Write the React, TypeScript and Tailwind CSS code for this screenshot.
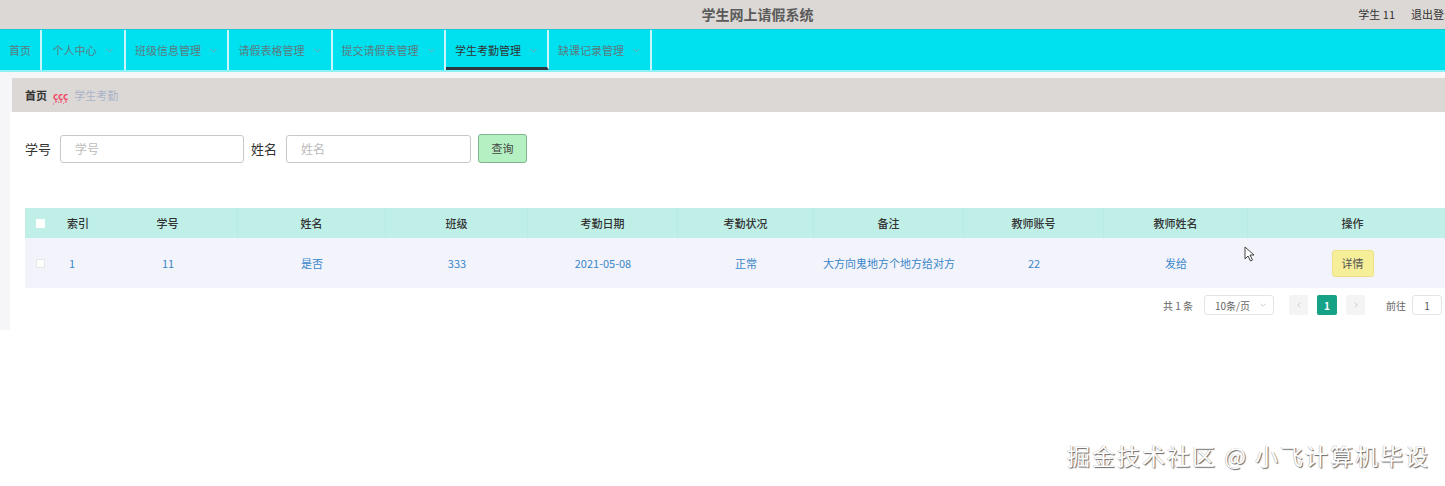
import React from 'react'

const font = { fontFamily: '"Noto Sans CJK SC", "Noto Sans", sans-serif' }

const navItems = [
  { label: '首页', w: 'w-[42px]', arrow: false },
  { label: '个人中心', w: 'w-[84px]', arrow: true },
  { label: '班级信息管理', w: 'w-[103px]', arrow: true },
  { label: '请假表格管理', w: 'w-[104px]', arrow: true },
  { label: '提交请假表管理', w: 'w-[113px]', arrow: true },
  { label: '学生考勤管理', w: 'w-[103px]', arrow: true, active: true },
  { label: '缺课记录管理', w: 'w-[103px]', arrow: true },
]

type Col = { title: string; value: string; w: string }

const cols: Col[] = [
  { title: '学号', value: '11', w: 'w-[140px]' },
  { title: '姓名', value: '是否', w: 'w-[148px]' },
  { title: '班级', value: '333', w: 'w-[142px]' },
  { title: '考勤日期', value: '2021-05-08', w: 'w-[150px]' },
  { title: '考勤状况', value: '正常', w: 'w-[136px]' },
  { title: '备注', value: '大方向鬼地方个地方给对方', w: 'w-[150px]' },
  { title: '教师账号', value: '22', w: 'w-[140px]' },
  { title: '教师姓名', value: '发给', w: 'w-[144px]' },
]

const Chevron = () => (
  <svg width="9" height="9" viewBox="0 0 10 10" className="ml-2">
    <path d="M2 3.5 L5 6.5 L8 3.5" fill="none" stroke="#8a9a9e" strokeWidth="1" />
  </svg>
)

const App: React.FC = () => {
  return (
    <div className="relative h-[486px] w-[1445px] overflow-hidden bg-white" style={font}>
      {/* top header */}
      <header className="flex h-[29px] items-center bg-[#dcd8d5]">
        <div className="flex-1" />
        <h1 className="pl-[70px] text-[14px] font-bold text-[#5a5a5a]">学生网上请假系统</h1>
        <div className="flex flex-1 items-center justify-end gap-[16px] text-[11px] text-[#333]">
          <span>学生 11</span>
          <span className="-mr-[10px]">退出登录</span>
        </div>
      </header>

      {/* nav */}
      <nav className="flex h-[43px] border-t border-[#1cc8d6] border-b-2 border-b-[#8cf2f8] bg-[#00e1f0]">
        {navItems.map((item) => (
          <div
            key={item.label}
            className={`flex ${item.w} items-center justify-center border-r-2 border-[#c8f6fa] text-[11px] ${
              item.active ? 'border-b-[3px] border-b-[#2b3a40] pt-[3px] text-[#333]' : 'text-[#5c7a80]'
            }`}
          >
            <span>{item.label}</span>
            {item.arrow && <Chevron />}
          </div>
        ))}
      </nav>

      {/* body */}
      <div className="flex h-[258px] flex-col bg-[#f6f6f8] pt-[6px]">
        <div className="ml-[12px] flex h-[34px] items-center gap-[6px] bg-[#dcd8d5] pl-[13px] text-[11px]">
          <span className="font-bold text-[#333]">首页</span>
          <span className="text-[10px] font-bold text-[#f04a6a] underline decoration-wavy">ççç</span>
          <span className="text-[#a9b4c8]">学生考勤</span>
        </div>

        <div className="ml-[10px] flex-1 bg-white pl-[15px]">
          {/* search */}
          <div className="mt-[22px] flex items-center text-[13px] text-[#333]">
            <span>学号</span>
            <input
              placeholder="学号"
              className="ml-[9px] h-[28px] w-[184px] rounded-[3px] border border-[#c8c8c8] px-[14px] text-[12px] placeholder:text-[#bbb]"
            />
            <span className="ml-[7px]">姓名</span>
            <input
              placeholder="姓名"
              className="ml-[9px] h-[28px] w-[185px] rounded-[3px] border border-[#c8c8c8] px-[14px] text-[12px] placeholder:text-[#bbb]"
            />
            <button className="ml-[7px] h-[29px] w-[49px] rounded-[3px] border border-[#7fb58c] bg-[#b4f0c2] text-[11px] text-[#444]">
              查询
            </button>
          </div>

          {/* table */}
          <div className="mt-[45px] text-[11px]">
            <div className="flex h-[30px] items-center bg-[#c0efe8] font-medium text-[#333]">
              <div className="flex w-[30px] justify-center">
                <span className="h-[9px] w-[9px] rounded-[1px] bg-white" />
              </div>
              <div className="w-[43px] pl-[12px]">索引</div>
              {cols.map((c) => (
                <div key={c.title} className={`${c.w} flex h-full items-center justify-center border-r border-[#b9ebe4]`}>
                  {c.title}
                </div>
              ))}
              <div className="flex-1 pl-[12px] text-center">操作</div>
            </div>
            <div className="flex h-[50px] items-center bg-[#f3f4fb] text-[#3a86c8]">
              <div className="flex w-[30px] justify-center">
                <span className="h-[9px] w-[9px] rounded-[1px] border border-[#e4e4e4] bg-white" />
              </div>
              <div className="w-[43px] pl-[14px]">1</div>
              {cols.map((c) => (
                <div key={c.title} className={`${c.w} text-center`}>
                  {c.value}
                </div>
              ))}
              <div className="flex flex-1 justify-center pl-[12px]">
                <button className="h-[27px] w-[42px] rounded-[3px] border border-[#ede08a] bg-[#f6ee98] text-[11px] text-[#555]">
                  详情
                </button>
              </div>
            </div>

            {/* pagination */}
            <div className="mt-[7px] flex items-center justify-end pr-[3px] text-[10px] text-[#666]">
              <span>共 1 条</span>
              <div className="ml-[11px] flex h-[20px] w-[70px] items-center justify-between rounded-[3px] border border-[#e4e4e4] pl-[10px] pr-[6px]">
                <span>10条/页</span>
                <svg width="8" height="8" viewBox="0 0 10 10">
                  <path d="M2 3.5 L5 6.5 L8 3.5" fill="none" stroke="#c0c4cc" strokeWidth="1" />
                </svg>
              </div>
              <div className="ml-[15px] flex h-[20px] w-[19px] items-center justify-center rounded-[2px] bg-[#f4f4f5]">
                <svg width="8" height="8" viewBox="0 0 10 10">
                  <path d="M6.5 2 L3.5 5 L6.5 8" fill="none" stroke="#c0c4cc" strokeWidth="1" />
                </svg>
              </div>
              <div className="ml-[9px] flex h-[20px] w-[20px] items-center justify-center rounded-[2px] bg-[#16a286] font-bold text-white">1</div>
              <div className="ml-[9px] flex h-[20px] w-[19px] items-center justify-center rounded-[2px] bg-[#f4f4f5]">
                <svg width="8" height="8" viewBox="0 0 10 10">
                  <path d="M3.5 2 L6.5 5 L3.5 8" fill="none" stroke="#c0c4cc" strokeWidth="1" />
                </svg>
              </div>
              <span className="ml-[21px]">前往</span>
              <div className="ml-[6px] flex h-[20px] w-[30px] items-center justify-center rounded-[3px] border border-[#e4e4e4] text-[#555]">1</div>
            </div>
          </div>
        </div>
      </div>

      {/* mouse cursor in screenshot */}
      <svg className="absolute left-[1244px] top-[246px]" width="12" height="16" viewBox="0 0 12 16">
        <path d="M1 1 L1 13 L4 10 L6.5 15 L8.5 14 L6 9 L10 9 Z" fill="white" stroke="#444" strokeWidth="1" />
      </svg>

      {/* watermark */}
      <div
        className="absolute left-[1067px] top-[438px] text-[23px] tracking-[2px] text-white"
        style={{ textShadow: '1px 1px 1px #666, -0.5px -0.5px 0 #bbb' }}
      >
        掘金技术社区 @ 小飞计算机毕设
      </div>
    </div>
  )
}

export default App
